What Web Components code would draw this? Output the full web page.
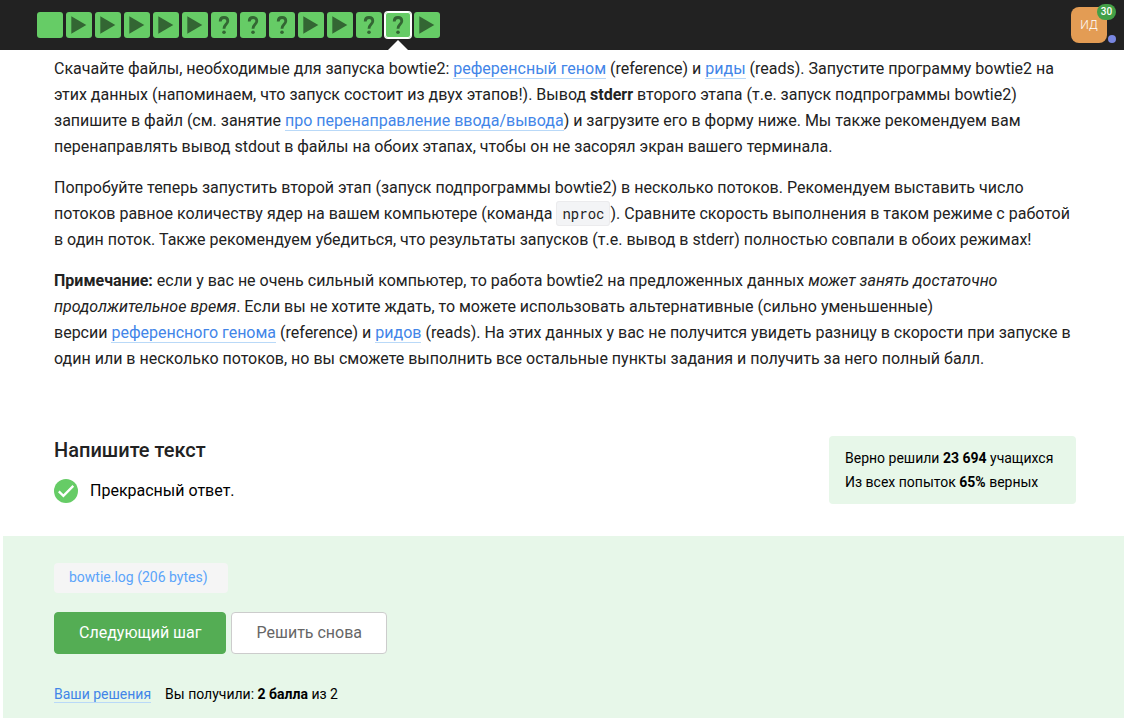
<!DOCTYPE html>
<html lang="ru">
<head>
<meta charset="utf-8">
<meta name="viewport" content="width=device-width, initial-scale=1">
<title>bowtie2</title>
<style>
  html, body { height: 100%; }
  body { margin: 0; background: #fff; color: #222; font: 16px/26px Roboto, "Open Sans", sans-serif; }
</style>
</head>
<body>
<lesson-page></lesson-page>

<script>
class BaseElement extends HTMLElement {
  render(html) {
    if (!this.shadowRoot) this.attachShadow({ mode: "open" });
    const template = document.createElement("template");
    template.innerHTML = html;
    this.shadowRoot.replaceChildren(template.content.cloneNode(true));
  }
}

customElements.define("step-link", class extends BaseElement {
  connectedCallback() {
    const icons = {
      text: "",
      video: '<path d="M5.3 4.3 20.3 13 5.3 21.7Z" fill="#336633"/>',
      quiz: '<path d="M9.2 9.4C9.2 7 10.7 5.5 13 5.5s3.8 1.3 3.8 3.6c0 3.2-3.8 3.4-3.8 7.6" fill="none" stroke="#336633" stroke-width="2.8"/><circle cx="13" cy="20.3" r="1.8" fill="#336633"/>'
    };
    const names = { text: "Текст", video: "Видео", quiz: "Задача" };
    const type = this.getAttribute("type");
    this.render(`
      <style>
        :host { display: block; position: relative; }
        a { display: block; width: 26px; height: 26px; border-radius: 3px; background: #6c6; }
        svg { display: block; }
        :host([active]) a { box-shadow: 0 0 0 1px #fff, inset 0 0 0 1px #fff; }
        :host([active])::after {
          content: ""; position: absolute; left: 3px; top: 28px;
          border: 10px solid transparent; border-top: 0; border-bottom-color: #fff;
        }
      </style>
      <a href="#" aria-label="${names[type]}"><svg width="26" height="26" viewBox="0 0 26 26" aria-hidden="true">${icons[type]}</svg></a>`);
  }
});

customElements.define("user-avatar", class extends BaseElement {
  connectedCallback() {
    this.render(`
      <style>
        :host { display: block; position: relative; }
        button { display: block; width: 36px; height: 36px; padding: 0; border: 0; border-radius: 8px;
          background: #e39c54; color: #fff; font: 300 12px/36px Roboto, sans-serif; cursor: pointer; }
        .count { position: absolute; right: -9px; top: -3px; width: 19px; height: 16px; border-radius: 8px;
          background: #43a047; color: #fff; font-size: 10px; font-weight: 500; line-height: 16px; text-align: center; }
        .dot { position: absolute; right: -9px; bottom: 0; width: 8px; height: 8px; border-radius: 50%; background: #7886e0; }
      </style>
      <button type="button"><slot></slot></button>
      <span class="count">${this.getAttribute("count")}</span>
      <span class="dot"></span>`);
  }
});

customElements.define("top-bar", class extends BaseElement {
  connectedCallback() {
    const steps = ["text", "video", "video", "video", "video", "video", "quiz", "quiz", "quiz", "video", "video", "quiz", "quiz", "video"];
    this.render(`
      <style>
        :host { display: flex; align-items: center; justify-content: space-between; height: 50px;
          padding: 0 17px 0 37px; background: #222; }
        nav { display: flex; gap: 3px; }
      </style>
      <nav>${steps.map((s, i) => `<step-link type="${s}"${i === 12 ? " active" : ""}></step-link>`).join("")}</nav>
      <user-avatar count="30">ИД</user-avatar>`);
  }
});

customElements.define("text-link", class extends BaseElement {
  connectedCallback() {
    this.render(`
      <style>
        :host { display: inline; }
        a { color: #4285e8; text-decoration: none; border-bottom: 1px solid #b9d9f8; }
      </style>
      <a href="#"><slot></slot></a>`);
  }
});

customElements.define("inline-code", class extends BaseElement {
  connectedCallback() {
    this.render(`
      <style>
        :host { display: inline; }
        code { padding: 2px 5px; border: 1px solid #ebebed; border-radius: 3px; background: #f3f4f6;
          font: 14px "Roboto Mono", "DejaVu Sans Mono", monospace; }
      </style>
      <code><slot></slot></code>`);
  }
});

customElements.define("task-text", class extends BaseElement {
  connectedCallback() {
    this.render(`
      <style>
        :host { display: flex; flex-direction: column; gap: 15px; }
        p { margin: 0; }
        .together { white-space: nowrap; }
      </style>
      <p>Скачайте файлы, необходимые для запуска bowtie2: <text-link>референсный геном</text-link> (reference) и <text-link>риды</text-link> (reads). Запустите программу bowtie2 на этих данных (напоминаем, что запуск состоит из двух этапов!). Вывод <b>stderr</b> второго этапа (т.е. запуск подпрограммы bowtie2) запишите в файл (см. занятие <text-link>про перенаправление ввода/вывода</text-link>) и загрузите его в форму ниже. Мы также рекомендуем вам перенаправлять вывод stdout в файлы на обоих этапах, чтобы он не засорял экран вашего терминала.</p>
      <p>Попробуйте теперь запустить второй этап (запуск подпрограммы bowtie2) в несколько потоков. Рекомендуем выставить число потоков равное количеству ядер на вашем компьютере (команда <inline-code>nproc</inline-code>). Сравните скорость выполнения в таком режиме с работой в один поток. Также рекомендуем убедиться, что результаты запусков (т.е. вывод в stderr) полностью совпали в обоих режимах!</p>
      <p><b>Примечание:</b> если у вас не очень сильный компьютер, то работа bowtie2 на предложенных данных <i>может занять достаточно продолжительное время</i>. Если вы не хотите ждать, то можете использовать альтернативные (сильно уменьшенные) <span class="together">версии <text-link>референсного генома</text-link></span> (reference) и <text-link>ридов</text-link> (reads). На этих данных у вас не получится увидеть разницу в скорости при запуске в один или в несколько потоков, но вы сможете выполнить все остальные пункты задания и получить за него полный балл.</p>`);
  }
});

customElements.define("task-status", class extends BaseElement {
  connectedCallback() {
    this.render(`
      <style>
        :host { display: flex; justify-content: space-between; align-items: flex-start; color: #000; }
        h2 { margin: 0; color: #222; font-size: 20px; font-weight: 500; line-height: 28px; }
        .result { display: flex; align-items: center; gap: 12px; margin-top: 15px; line-height: 24px; }
        svg { display: block; }
        .stats { min-width: 215px; padding: 10px 16px; border-radius: 4px; background: #e7f7e9; font-size: 14px; line-height: 24px; }
        .stats p { margin: 0; }
      </style>
      <div>
        <h2>Напишите текст</h2>
        <div class="result">
          <svg width="24" height="24" viewBox="0 0 24 24" aria-hidden="true"><circle cx="12" cy="12" r="12" fill="#6c6"/><path d="m4.8 12.4 4.6 4.4 9.9-9.9" fill="none" stroke="#fff" stroke-width="2.3"/></svg>
          <span>Прекрасный ответ.</span>
        </div>
      </div>
      <div class="stats">
        <p>Верно решили <b>23&nbsp;694</b> учащихся</p>
        <p>Из всех попыток <b>65%</b> верных</p>
      </div>`);
  }
});

customElements.define("action-button", class extends BaseElement {
  connectedCallback() {
    this.render(`
      <style>
        :host { display: block; }
        button { display: block; height: 42px; padding: 0 24px; border: 1px solid #ccc; border-radius: 4px;
          background: #fff; color: #666; font: 16px/24px Roboto, sans-serif; cursor: pointer; }
        :host([primary]) button { border-color: #54ad54; background: #54ad54; color: #fff; }
      </style>
      <button type="button"><slot></slot></button>`);
  }
});

customElements.define("answer-panel", class extends BaseElement {
  connectedCallback() {
    this.render(`
      <style>
        :host { display: block; color: #000; background: #e7f7e9; font-size: 14px; }
        .file { display: inline-block; min-width: 144px; padding: 0 15px 2px; border-radius: 4px; background: #f5f5f5; color: #5ba4fa;
          line-height: 28px; text-decoration: none; vertical-align: top; }
        .actions { display: flex; gap: 5px; margin: 19px 0 28px; }
        .score { display: flex; gap: 14px; line-height: 24px; }
      </style>
      <a class="file" href="#">bowtie.log (206 bytes)</a>
      <div class="actions">
        <action-button primary>Следующий шаг</action-button>
        <action-button>Решить снова</action-button>
      </div>
      <div class="score">
        <text-link>Ваши решения</text-link>
        <span>Вы получили: <b>2 балла</b> из 2</span>
      </div>`);
  }
});

customElements.define("lesson-page", class extends BaseElement {
  connectedCallback() {
    this.render(`
      <style>
        :host { display: flex; flex-direction: column; min-height: 100%; }
        main { flex: 1; display: flex; flex-direction: column; }
        task-text { padding: 6px 48px 0 54px; }
        task-status { padding: 64px 48px 32px 54px; }
        answer-panel { flex: 1; margin-left: 3px; padding: 27px 48px 12px 51px; }
      </style>
      <top-bar></top-bar>
      <main>
        <task-text></task-text>
        <task-status></task-status>
        <answer-panel></answer-panel>
      </main>`);
  }
});
</script>
</body>
</html>
